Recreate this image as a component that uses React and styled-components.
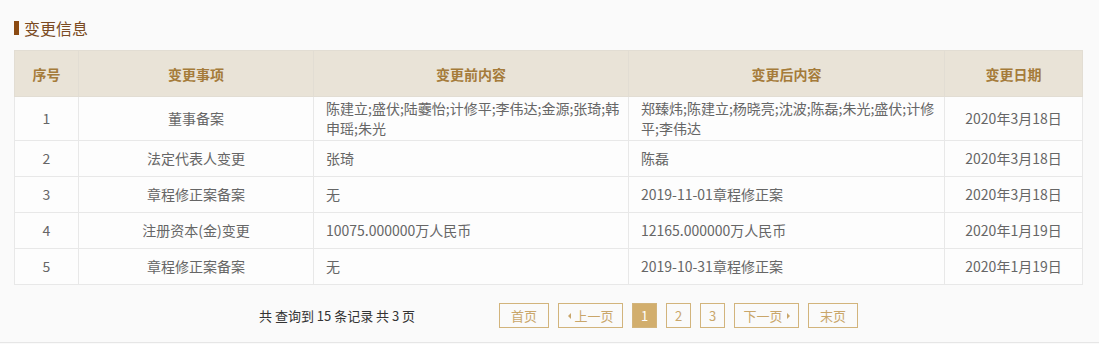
import React from "react";
import styled, { createGlobalStyle } from "styled-components";

const GlobalStyle = createGlobalStyle`
  body {
    margin: 0;
    background: #fafafa;
    font-family: "Noto Sans CJK SC", "Liberation Sans", sans-serif;
  }
`;

const Section = styled.div`
  padding: 0 16px 0 14px;
  border-bottom: 1px solid #e6e6e6;
`;

const Title = styled.h3`
  margin: 0;
  padding: 18px 0 12px;
  display: flex;
  align-items: center;
  font-size: 16px;
  line-height: 20px;
  font-weight: normal;
  color: #7a4a22;

  &::before {
    content: "";
    width: 5px;
    height: 14px;
    margin-right: 5px;
    background: #8b4a12;
  }
`;

const Table = styled.table`
  width: 100%;
  border-collapse: collapse;
  table-layout: fixed;
  background: #fdfdfd;
`;

const Th = styled.th`
  height: 45px;
  padding: 0;
  background: #e9e3d7;
  border: 1px solid #e2ddd3;
  color: #a57b3a;
  font-size: 14px;
  font-weight: bold;
  text-align: center;
`;

const Td = styled.td`
  height: 32px;
  padding: ${(props) => (props.left ? "1px 6px 2px 12px" : "1px 8px 2px")};
  border: 1px solid #e8e8e8;
  color: #666;
  font-size: 14px;
  line-height: 20px;
  text-align: ${(props) => (props.left ? "left" : "center")};
  vertical-align: middle;
`;

const Pager = styled.div`
  display: flex;
  align-items: center;
  padding: 18px 0 14px 245px;
`;

const Summary = styled.span`
  font-size: 13px;
  color: #333;
  margin-right: 84px;
`;

const PageButton = styled.span`
  box-sizing: border-box;
  display: inline-flex;
  align-items: center;
  justify-content: center;
  gap: 4px;
  width: ${(props) => props.w || 25}px;
  height: 25px;
  margin-right: 9px;
  border: 1px solid #d2b47c;
  background: ${(props) => (props.active ? "#d2ae6d" : "transparent")};
  color: ${(props) => (props.active ? "#fff" : "#c9a66a")};
  font-size: 13px;
`;

const Arrow = styled.i`
  width: 0;
  height: 0;
  border-top: 3px solid transparent;
  border-bottom: 3px solid transparent;
  ${(props) =>
    props.dir === "left"
      ? "border-right: 3px solid #c9a66a;"
      : "border-left: 3px solid #c9a66a;"}
`;

const rows = [
  {
    item: "董事备案",
    before: "陈建立;盛伏;陆虁怡;计修平;李伟达;金源;张琦;韩申瑶;朱光",
    after: "郑臻炜;陈建立;杨晓亮;沈波;陈磊;朱光;盛伏;计修平;李伟达",
    date: "2020年3月18日",
  },
  { item: "法定代表人变更", before: "张琦", after: "陈磊", date: "2020年3月18日" },
  { item: "章程修正案备案", before: "无", after: "2019-11-01章程修正案", date: "2020年3月18日" },
  {
    item: "注册资本(金)变更",
    before: "10075.000000万人民币",
    after: "12165.000000万人民币",
    date: "2020年1月19日",
  },
  { item: "章程修正案备案", before: "无", after: "2019-10-31章程修正案", date: "2020年1月19日" },
];

export default function App() {
  return (
    <>
      <GlobalStyle />
      <Section>
        <Title>变更信息</Title>
        <Table>
          <colgroup>
            <col style={{ width: 64 }} />
            <col style={{ width: 235 }} />
            <col style={{ width: 315 }} />
            <col style={{ width: 316 }} />
            <col />
          </colgroup>
          <thead>
            <tr>
              <Th>序号</Th>
              <Th>变更事项</Th>
              <Th>变更前内容</Th>
              <Th>变更后内容</Th>
              <Th>变更日期</Th>
            </tr>
          </thead>
          <tbody>
            {rows.map((r, i) => (
              <tr key={i}>
                <Td>{i + 1}</Td>
                <Td>{r.item}</Td>
                <Td left>{r.before}</Td>
                <Td left>{r.after}</Td>
                <Td>{r.date}</Td>
              </tr>
            ))}
          </tbody>
        </Table>
        <Pager>
          <Summary>共 查询到 15 条记录 共 3 页</Summary>
          <PageButton w={50}>首页</PageButton>
          <PageButton w={65}>
            <Arrow dir="left" />
            上一页
          </PageButton>
          <PageButton active>1</PageButton>
          <PageButton>2</PageButton>
          <PageButton>3</PageButton>
          <PageButton w={65}>
            下一页
            <Arrow dir="right" />
          </PageButton>
          <PageButton w={50}>末页</PageButton>
        </Pager>
      </Section>
    </>
  );
}
